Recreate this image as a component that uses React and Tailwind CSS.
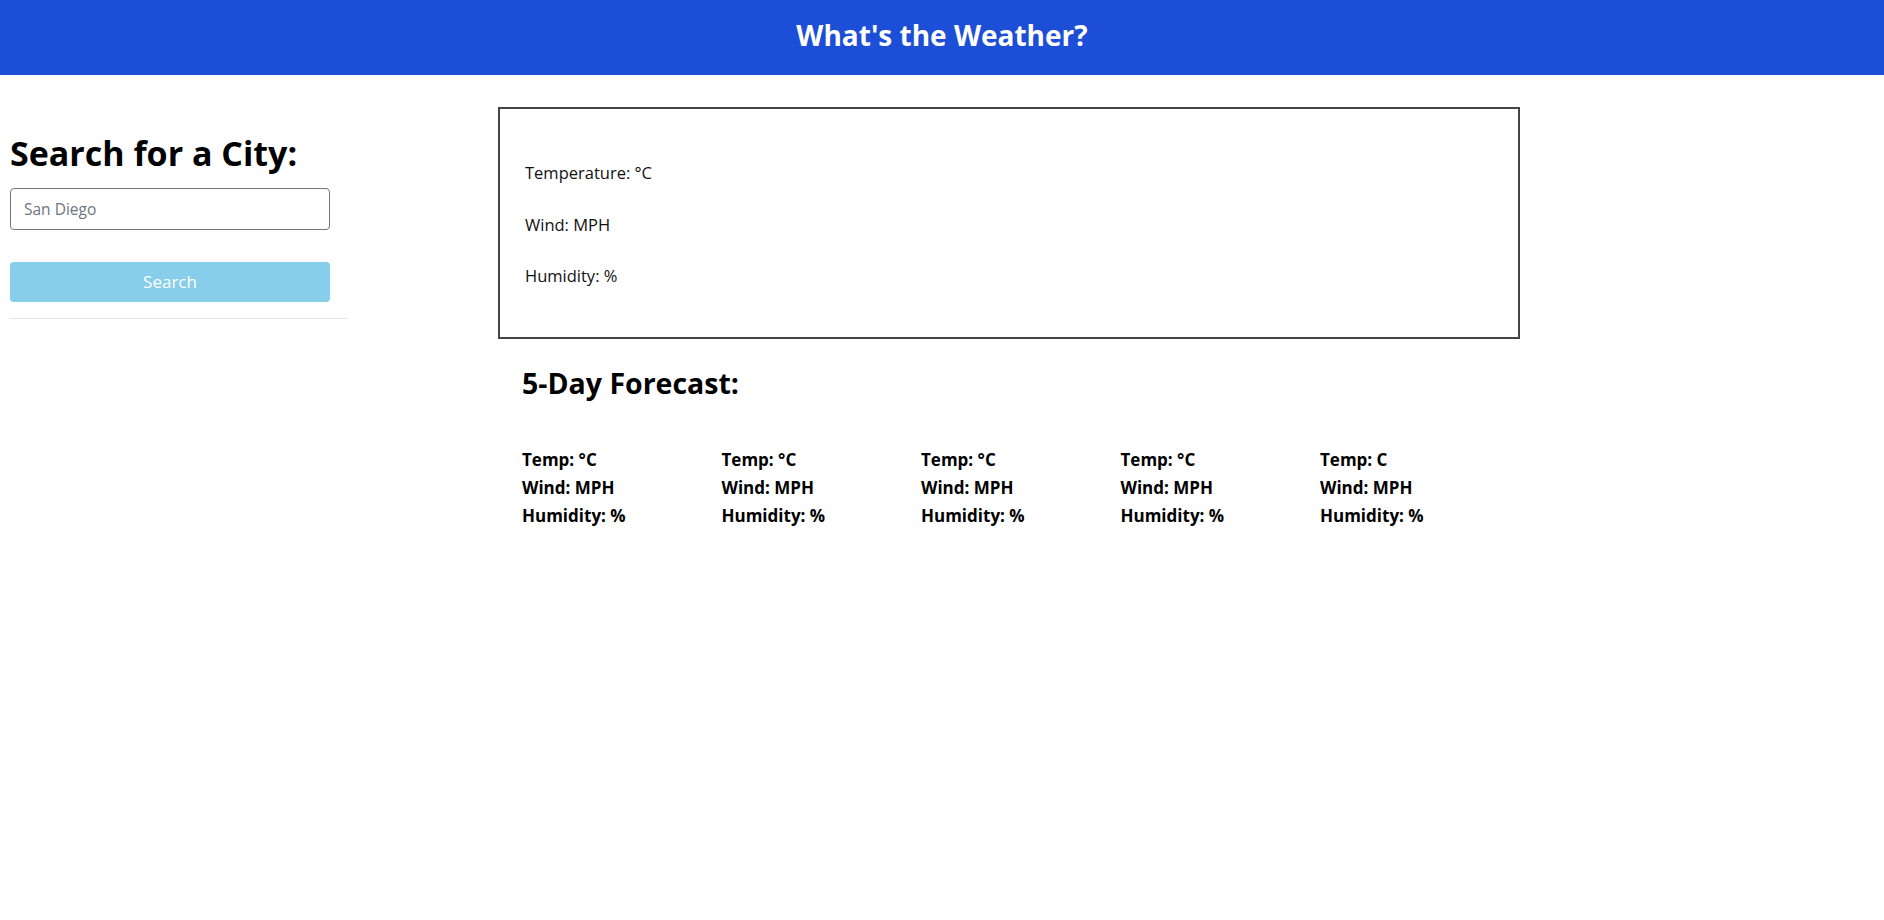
import React from "react";

const font = { fontFamily: '"Segoe UI", "Open Sans", "Noto Sans", sans-serif' };

function ForecastCard({ temp }) {
  return (
    <div className="flex flex-col text-[17px] font-bold leading-[28px] text-black">
      <span>{temp}</span>
      <span>Wind: MPH</span>
      <span>Humidity: %</span>
    </div>
  );
}

export default function App() {
  const temps = ["Temp: °C", "Temp: °C", "Temp: °C", "Temp: °C", "Temp: C"];
  return (
    <div className="min-h-screen bg-white" style={font}>
      <header className="h-[75px] bg-[#1d4ed8] flex items-center justify-center">
        <h1 className="text-white font-bold text-[28px] leading-[34px] mb-[6px]">What's the Weather?</h1>
      </header>
      <div className="flex">
        <aside className="w-[347px] pl-[10px] pt-[58px] flex flex-col">
          <h2 className="text-[34px] leading-[40px] font-bold text-black">Search for a City:</h2>
          <input
            className="mt-[15px] w-[320px] h-[42px] border border-[#767676] rounded-[4px] px-[13px] text-[15.5px] text-gray-700 placeholder:text-[#6c757d] outline-none"
            placeholder="San Diego"
          />
          <button className="mt-[32px] w-[320px] h-[40px] rounded-[4px] bg-[#87ceeb] text-white text-[17px]">
            Search
          </button>
          <hr className="mt-[16px] border-0 border-t border-[#e5e5e5]" />
        </aside>
        <main className="ml-[151px] mt-[32px] w-[1022px] flex flex-col">
          <section className="h-[232px] border-2 border-[#444444] pl-[25px] pt-[50px] flex flex-col gap-[23.5px] text-[16.5px] leading-[28px] text-[#111111]">
            <p>Temperature: °C</p>
            <p>Wind: MPH</p>
            <p>Humidity: %</p>
          </section>
          <section className="pl-[24px] pt-[27px]">
            <h3 className="text-[28.5px] leading-[34px] font-bold text-black">5-Day Forecast:</h3>
            <div className="mt-[46px] grid grid-cols-[repeat(5,199.5px)]">
              {temps.map((t, i) => (
                <ForecastCard key={i} temp={t} />
              ))}
            </div>
          </section>
        </main>
      </div>
    </div>
  );
}
